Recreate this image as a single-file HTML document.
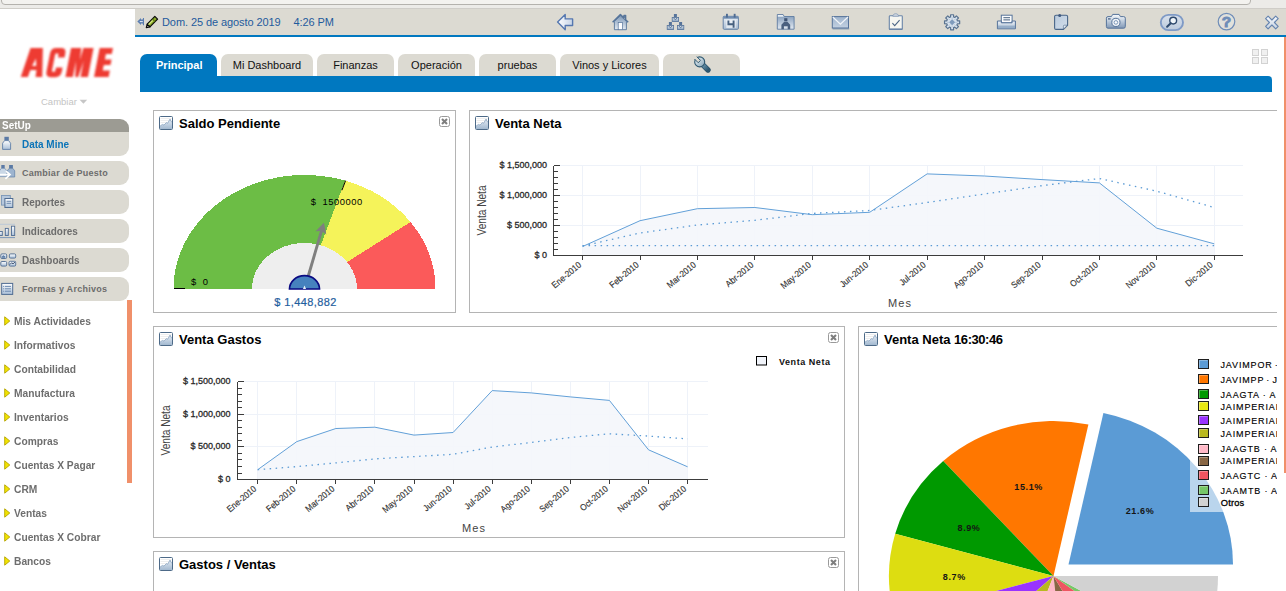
<!DOCTYPE html>
<html>
<head>
<meta charset="utf-8">
<title>Dashboard</title>
<style>
*{box-sizing:border-box;margin:0;padding:0}
html,body{width:1286px;height:591px;overflow:hidden;background:#fff;font-family:"Liberation Sans",sans-serif;}
body{position:relative}
.abs{position:absolute}
#chrome{left:0;top:0;width:1286px;height:9px;background:#ecebe8;border-bottom:1px solid #cfcdc8}
#chrome .bar{position:absolute;left:1px;top:-10px;width:1250px;height:15px;border:1px solid #b4b2ad;border-radius:4px;background:#f3f2ef}
#toolbar{left:135px;top:9px;width:1151px;height:26px;background:#dcdad2}
#tbline{left:135px;top:35px;width:1151px;height:2px;background:#0078c0}
#date,#date2{left:162px;top:16px;font-size:11px;color:#1f5b9d;white-space:pre;letter-spacing:-.09px}
#date2{left:293.5px}
.ico{position:absolute;top:0;height:26px}
/* sidebar */
#cambiar{left:41px;top:96px;font-size:9.5px;color:#c4c4c4}
#setup{left:0;top:119px;width:129px;height:13px;background:#9c9b93;border-top-right-radius:9px;color:#fff;font-weight:bold;font-size:11px;line-height:13px}
#setup span{position:absolute;left:2px;top:0;transform:scaleX(.905);transform-origin:0 50%}
.mi{position:absolute;left:0;width:129px;height:24px;background:#dcdad2;border-radius:0 9px 9px 0;color:#6c6c6c;font-weight:bold;font-size:11px;line-height:24px;white-space:nowrap}
.mi span{position:absolute;left:22px;top:0;display:block;transform:scaleX(.905);transform-origin:0 50%}
.mi.sm{font-size:9px}
.mi.sm span{transform:none;letter-spacing:.27px}
.mi svg{position:absolute;left:0;top:3px}
.tr{position:absolute;left:14px;color:#6e6e6e;font-weight:bold;font-size:11px;white-space:nowrap;line-height:14px;transform:scaleX(.93);transform-origin:0 50%}
.ar{position:absolute;left:4px}
#obar{left:127px;top:300px;width:5px;height:183px;background:#f0906a}
#obar2{left:1284px;top:37px;width:2px;height:436px;background:#f0906a}
/* tabs */
.tab{position:absolute;top:54px;height:22px;background:#dcdad2;border-radius:7px 7px 0 0;font-size:11px;line-height:22px;text-align:center;color:#111}
.tab.on{background:#0078c0;color:#fff;font-weight:bold;text-indent:1.5px}
#tabbar{left:140px;top:76px;width:1132px;height:16px;background:#0078c0;border-top-right-radius:4px}
/* panels */
.panel{position:absolute;border:1px solid #b4b4b4;background:#fff}
.pt{position:absolute;left:25px;top:5px;font-size:13px;font-weight:bold;color:#000;white-space:nowrap}
.pi{position:absolute;left:5px;top:5px}
.px{position:absolute;right:5px;top:5px}
#clip{left:0;top:0;width:1277px;height:591px;overflow:hidden}
svg text{font-family:"Liberation Sans",sans-serif}
</style>
</head>
<body>
<div id="chrome" class="abs"><div class="bar"></div></div>
<div id="toolbar" class="abs"><svg style="position:absolute;left:0;top:0" width="1151" height="26" viewBox="135 9 1151 26">
<defs>
<linearGradient id="ig" x1="0" y1="0" x2="0" y2="1"><stop offset="0" stop-color="#eef3f8"/><stop offset="1" stop-color="#7f9bbb"/></linearGradient>
<linearGradient id="ig2" x1="0" y1="0" x2="0" y2="1"><stop offset="0" stop-color="#9db3cc"/><stop offset="1" stop-color="#5f7fa6"/></linearGradient>
<linearGradient id="ig0" x1="0" y1="0" x2="1" y2="0"><stop offset="0" stop-color="#ffffff"/><stop offset="1" stop-color="#c6d3e6"/></linearGradient>
<linearGradient id="ig3" x1="0" y1="0" x2="0" y2="1"><stop offset="0" stop-color="#7f99b8"/><stop offset="1" stop-color="#e3eaf2"/></linearGradient>
<linearGradient id="ig4" x1="0" y1="0" x2="0" y2="1"><stop offset="0" stop-color="#eef2f7"/><stop offset="1" stop-color="#a9bdd3"/></linearGradient>
<linearGradient id="ig5" x1="0" y1="0" x2="0" y2="1"><stop offset="0" stop-color="#9fb4cd"/><stop offset="1" stop-color="#c3d1e1"/></linearGradient>
<linearGradient id="ig6" x1="0" y1="0" x2="1" y2="1"><stop offset="0" stop-color="#b9cadd"/><stop offset="1" stop-color="#d3deea"/></linearGradient>
<linearGradient id="ig7" x1="0" y1="0" x2="0" y2="1"><stop offset="0" stop-color="#fbfcfd"/><stop offset=".45" stop-color="#c3d0df"/><stop offset="1" stop-color="#7f97b5"/></linearGradient>
<linearGradient id="ig8" x1="0" y1="0" x2="0" y2="1"><stop offset="0" stop-color="#d9e1ec"/><stop offset="1" stop-color="#bccadc"/></linearGradient>
<linearGradient id="ig9" x1="0" y1="0" x2="0" y2="1"><stop offset="0" stop-color="#fbfcfe"/><stop offset="1" stop-color="#c3d0e0"/></linearGradient>
</defs>
<!-- pin -->
<path d="M137.300 21.600l3.700-3.500v1.500h1.700l.4-1.600h.9v7.200h-.9l-.4-1.600H141v1.500z" fill="#5b7db0"/>
<path d="M139.800 21.600h3" stroke="#e8eef6" stroke-width="1"/>
<!-- pencil -->
<path d="M147.18 24.06L154.82 16.42L157.58 19.18L149.94 26.82z" fill="#8aab28" stroke="#0a0a0a" stroke-width="1.200" stroke-linejoin="round"/>
<path d="M146.30 27.70L147.18 24.06L149.94 26.82z" fill="#f4f1dc" stroke="#0a0a0a" stroke-width="1.200" stroke-linejoin="round"/>
<path d="M148.56 24.59L152.66 20.49" stroke="#d9ea86" stroke-width="1.200"/>
<path d="M151.99 19.25L152.77 18.47L155.53 21.23L154.75 22.01z" fill="#5e7a14"/>
<!-- back -->
<path d="M557.6 22l7.6-7.4v4.3h7.4v6.6h-7.4v4.3z" fill="url(#ig0)" stroke="#5577b0" stroke-width="1.400" stroke-linejoin="round"/>
<!-- home -->
<path d="M612.6 22.2l7.8-7.6 3.6 3.5v-2.6h1.6v4.2l2.6 2.5" fill="none" stroke="#56749a" stroke-width="1.5" stroke-linejoin="round"/>
<path d="M614.4 21.4l6-5.7 6 5.7v8.300h-12z" fill="url(#ig3)" stroke="#56749a" stroke-width=".9"/>
<rect x="618.2" y="22.6" width="4.400" height="7.100" fill="#fbfcfe" stroke="#56749a" stroke-width=".7"/>
<!-- org -->
<g stroke="#56739a" stroke-width=".8" fill="url(#ig)"><rect x="672.2" y="17.400" width="6.400" height="4.200"/><rect x="667.2" y="25.400" width="6.400" height="4.200"/><rect x="677.400" y="25.400" width="6.400" height="4.200"/></g>
<g fill="#56739a"><rect x="673.900" y="14" width="3" height="3.400"/><rect x="668.900" y="22" width="3" height="3.400"/><rect x="679.100" y="22" width="3" height="3.400"/></g>
<path d="M673.400 18l2 1.500 2-1.500M668.400 26l2 1.500 2-1.500M678.600 26l2 1.500 2-1.500" fill="none" stroke="#3f5a80" stroke-width=".8"/>
<!-- calendar -->
<rect x="723.2" y="16.300" width="15.200" height="13" rx="1" fill="url(#ig4)" stroke="#6582a6" stroke-width="1"/>
<rect x="723.2" y="16.300" width="15.200" height="2.400" fill="#6f8cb0"/>
<rect x="726" y="13.800" width="1.900" height="3.800" fill="#4f6c92"/><rect x="733.700" y="13.800" width="1.900" height="3.800" fill="#4f6c92"/>
<rect x="726.300" y="20" width="9.400" height="8" fill="#f4f7fa" opacity=".7"/>
<path d="M728.400 20.400v3.800h5.200v-3.800v7.400" fill="none" stroke="#46607f" stroke-width="1.900"/>
<!-- folder person -->
<path d="M777.300 29.200V14.600h5.800l1.200 1.900h9.800V29.200z" fill="url(#ig3)" stroke="#5f7ca2" stroke-width=".9" stroke-linejoin="round"/>
<path d="M777.800 15.100h5l1 1.600h-6z" fill="#e9eff5"/>
<rect x="784.200" y="18.200" width="3.200" height="3.200" fill="#3f5474"/>
<path d="M781.400 29.200v-4.400l2.600-2.800h3.600l2.600 2.800v4.400h-2.500v-3h-3.800v3z" fill="#4a607f"/>
<!-- mail -->
<rect x="832.300" y="16.600" width="16.200" height="11.400" fill="url(#ig5)" stroke="#56739a" stroke-width="1"/>
<path d="M832.800 17l7.600 7.200 7.600-7.200" fill="none" stroke="#f2f5f9" stroke-width="1.200"/>
<rect x="832.600" y="28.200" width="16.600" height="1.200" fill="#6583a8" opacity=".8"/>
<!-- clipboard -->
<rect x="889.300" y="15.700" width="13" height="13.800" rx=".8" fill="#f6f6f1" stroke="#6a85a8" stroke-width="1.100"/>
<path d="M889.300 28.400h13v1.300h-13z" fill="#6a85a8"/>
<path d="M892.800 16.200c0-3.200 5.800-3.200 5.800 0z" fill="#d9dee4" stroke="#7a93b2" stroke-width=".8"/>
<path d="M892.400 23.200l2.300 2.500 4.900-5.600" fill="none" stroke="#4a6484" stroke-width="1.050"/>
<!-- gear -->
<g transform="translate(952.1 22.300)"><path d="M5.29 -1.52 L7.56 -1.47 L7.56 1.47 L5.29 1.52 L4.81 2.67 L6.38 4.31 L4.31 6.38 L2.67 4.81 L1.52 5.29 L1.47 7.56 L-1.47 7.56 L-1.52 5.29 L-2.67 4.81 L-4.31 6.38 L-6.38 4.31 L-4.81 2.67 L-5.29 1.52 L-7.56 1.47 L-7.56 -1.47 L-5.29 -1.52 L-4.81 -2.67 L-6.38 -4.31 L-4.31 -6.38 L-2.67 -4.81 L-1.52 -5.29 L-1.47 -7.56 L1.47 -7.56 L1.52 -5.29 L2.67 -4.81 L4.31 -6.38 L6.38 -4.31 L4.81 -2.67Z" fill="#d9e3ed" stroke="#5a7391" stroke-width="1.200" stroke-linejoin="round"/>
<path d="M0-3L3 0 0 3-3 0z" fill="#7f9bbc"/><path d="M0-5.200V-3M0 3v2.200M-5.200 0H-3M3 0h2.200M-3.700-3.700l1.700 1.700M3.700-3.700l-1.700 1.700M-3.700 3.700l1.700-1.700M3.700 3.700l-1.700-1.700" stroke="#a9bdd3" stroke-width=".8"/></g>
<!-- printer -->
<rect x="1001.300" y="15.200" width="10.800" height="7.600" fill="#fbfcfd" stroke="#56739a" stroke-width="1"/>
<path d="M1003.400 17.700h6.600M1003.400 19.900h6.600" stroke="#46607f" stroke-width="1"/>
<path d="M997.400 21h3.900v1.800h10.800V21h3.300v7.800h-18z" fill="url(#ig4)" stroke="#56739a" stroke-width="1" stroke-linejoin="round"/>
<rect x="997.900" y="25.600" width="17" height="2.800" fill="#8aa4c2" opacity=".75"/>
<!-- note -->
<path d="M1054.600 16.600q0-1.400 1.400-1.400h10.200q1.400 0 1.400 1.400v8.600l-4.200 4.200h-7.400q-1.400 0-1.400-1.400z" fill="url(#ig6)" stroke="#4a6688" stroke-width="1.100"/>
<path d="M1067.400 25.200h-3q-1 0-1 1v3z" fill="#e4ebf3" stroke="#4a6688" stroke-width=".6"/>
<circle cx="1059.700" cy="15.400" r="1.500" fill="#3f5a80"/>
<!-- camera -->
<path d="M1106.400 18.200q0-1.600 1.600-1.600h3.400l1.300-2.200h6.400l1.300 2.200h3.300q1.600 0 1.600 1.600v8.400q0 1.600-1.600 1.600h-15.700q-1.600 0-1.600-1.600z" fill="url(#ig7)" stroke="#56739a" stroke-width="1"/>
<circle cx="1115.900" cy="22.400" r="4.100" fill="#eef2f7" stroke="#56739a" stroke-width="1"/><circle cx="1115.900" cy="22.400" r="1.800" fill="#fbfcfe" stroke="#6f8cb0" stroke-width=".9"/>
<rect x="1108" y="18.300" width="2.600" height="1.200" fill="#3f5a80"/>
<!-- search -->
<rect x="1160.800" y="14.900" width="22.200" height="15.200" rx="7.600" fill="url(#ig8)" stroke="#7f9ac6" stroke-width="1.900"/>
<circle cx="1173.200" cy="20.600" r="3.400" fill="#f0f5f9" stroke="#2f4a6e" stroke-width="1.400"/>
<path d="M1170.700 23.300l-3.600 3.400" stroke="#2f4a6e" stroke-width="2" stroke-linecap="round"/>
<!-- help -->
<circle cx="1226.500" cy="21.600" r="8.300" fill="#e1e1dc" stroke="#6f8db8" stroke-width="1.200"/>
<text x="1226.600" y="27.300" font-size="15.500" style="font-weight:700" fill="#6f8db8" stroke="#6f8db8" stroke-width=".9" text-anchor="middle">?</text>
<!-- close X -->
<path d="M1265.6 18.7 L1268.1 16.2 L1271.9 20.0 L1275.7 16.2 L1278.2 18.7 L1274.4 22.5 L1278.2 26.3 L1275.7 28.8 L1271.9 25.0 L1268.1 28.8 L1265.6 26.3 L1269.4 22.5Z" fill="url(#ig9)" stroke="#6483ae" stroke-width="1.100" stroke-linejoin="round"/>
</svg>
</div>
<div id="tbline" class="abs"></div>
<div id="date" class="abs">Dom. 25 de agosto 2019</div><div id="date2" class="abs">4:26 PM</div>

<!-- SIDEBAR -->
<svg class="abs" style="left:10px;top:40px" width="114" height="46" viewBox="10 40 114 46">
<defs><filter id="lb" x="-5%" y="-10%" width="110%" height="120%"><feGaussianBlur stdDeviation="0.8"/></filter></defs>
<g fill="#ee3a32" fill-rule="evenodd" style="filter:url(#lb)"><g transform="skewX(-11) translate(14.500 0)">
<path d="M21.2 77L25.4 48H37.700L42.700 77H36L35.600 70H29.500L28.300 77zM30.400 65.900H34.500L32.900 58.600z"/>
<path d="M45.9 53.4q0-5.4 5.4-5.4H55.8q5.4 0 5.4 5.4v4h-6.600v-3q0-1-1-1h-1.400q-1 0-1 1v16.400q0 1 1 1h1.400q1 0 1-1v-3.400h6.600v4.400q0 5.4-5.4 5.4H51.3q-5.4 0-5.4-5.4z"/>
<path d="M65.9 77V48h10.2l1.0 12L78.2 48H88.4v29h-7.4V61L78.7 77h-3L73.3 61V77z"/>
<path d="M94.5 77V48h13.3v6.100h-5.9v5.300h6.7v5.600h-6.7v5.600h7.2V77z"/>
</g></g>
</svg>
<div id="cambiar" class="abs">Cambiar</div><svg class="abs" style="left:79px;top:99px" width="9" height="6" viewBox="0 0 9 6"><path d="M.6.8h7.600L4.400 4.800z" fill="#c6c6c6"/></svg>
<div id="setup" class="abs"><span>SetUp</span></div>
<div class="mi" style="top:132px;border-top-right-radius:0;color:#0b74b8"><svg style="position:absolute;left:0;top:0" width="22" height="24" viewBox="0 0 22 24"><defs><linearGradient id="sg" x1="0" y1="0" x2="0" y2="1"><stop offset="0" stop-color="#ffffff"/><stop offset="1" stop-color="#a9bfd8"/></linearGradient></defs><rect x="4.4" y="4.8" width="4.4" height="4" fill="#5b7aa5"/><path d="M2.6 11.200l2-2.600h4l2 2.600v6.200h-8z" fill="url(#sg)" stroke="#5f7fa8" stroke-width=".9" stroke-linejoin="round"/></svg><span>Data Mine</span></div>
<div class="mi sm" style="top:161px"><svg style="position:absolute;left:0;top:0" width="22" height="24" viewBox="0 0 22 24"><rect x="1.300" y="4" width="3.400" height="3.400" fill="#5b7aa5"/><rect x="9.100" y="4" width="3.800" height="3.400" fill="#5b7aa5"/><path d="M-.5 9.800l1.800-2.400h3.600l1.800 2.400v5.800h-7.200z" fill="#c9d7e6" stroke="#6f8db3" stroke-width=".7"/><path d="M7.300 9.800l1.800-2.400h3.800l1.800 2.400v6.200h-7.400z" fill="#9db4cf" stroke="#5f7fa8" stroke-width=".7"/><path d="M0 13.600h9.500M6 10.200l4 3.400-4.600 4.200" fill="none" stroke="#fff" stroke-width="1.700" stroke-linejoin="miter"/></svg><span>Cambiar de Puesto</span></div>
<div class="mi" style="top:190px"><svg style="position:absolute;left:0;top:0" width="22" height="24" viewBox="0 0 22 24"><defs><linearGradient id="sg3" x1="0" y1="0" x2="0" y2="1"><stop offset="0" stop-color="#ffffff"/><stop offset="1" stop-color="#a9bfd8"/></linearGradient></defs><rect x="1.500" y="5.500" width="8.800" height="9.600" fill="#b7c8dc" stroke="#7b97b8" stroke-width=".9"/><rect x="4.900" y="8.500" width="7.900" height="9" fill="url(#sg3)" stroke="#4f6c92" stroke-width="1"/><path d="M6.600 11.300h4.600M6.600 13.300h4.600" stroke="#5f7fa8" stroke-width=".9"/></svg><span>Reportes</span></div>
<div class="mi" style="top:219px"><svg style="position:absolute;left:0;top:0" width="22" height="24" viewBox="0 0 22 24"><defs><linearGradient id="sg4" x1="0" y1="0" x2="0" y2="1"><stop offset="0" stop-color="#ffffff"/><stop offset="1" stop-color="#a9bfd8"/></linearGradient></defs><path d="M0 5.300h15" stroke="#b4c4d8" stroke-width=".8"/><path d="M0 18.600h15" stroke="#7b97b8" stroke-width="1"/><g fill="url(#sg4)" stroke="#4f6c92" stroke-width=".9"><rect x="-.5" y="12.500" width="2.800" height="4"/><rect x="5.300" y="9.400" width="3" height="7.100"/><rect x="11.500" y="7.200" width="3.200" height="9.300"/></g></svg><span>Indicadores</span></div>
<div class="mi" style="top:248px"><svg style="position:absolute;left:0;top:0" width="22" height="24" viewBox="0 0 22 24"><defs><linearGradient id="sg5" x1="0" y1="0" x2="0" y2="1"><stop offset="0" stop-color="#ffffff"/><stop offset="1" stop-color="#a9bfd8"/></linearGradient></defs><g fill="url(#sg5)" stroke="#4f6c92" stroke-width=".9"><rect x=".8" y="5.900" width="5.900" height="4.600" rx="1.200"/><rect x="9.400" y="5.900" width="6.300" height="4.200" rx="1.200"/><rect x=".8" y="13.500" width="5.900" height="4.600" rx="1.200"/><rect x="9" y="13.300" width="6.700" height="4.800" rx="1.200"/></g><path d="M2 9.800v-1.400l1.300-1.400 1 1.200.8-.6v2.200z" fill="#5f7fa8"/><path d="M9.800 16.600l1.800-1.800 1.400 1 2.200-1.800" fill="none" stroke="#2f4566" stroke-width=".9"/></svg><span>Dashboards</span></div>
<div class="mi sm" style="top:277px"><svg style="position:absolute;left:0;top:0" width="22" height="24" viewBox="0 0 22 24"><defs><linearGradient id="sg6" x1="0" y1="0" x2="0" y2="1"><stop offset="0" stop-color="#ffffff"/><stop offset="1" stop-color="#a9bfd8"/></linearGradient></defs><rect x="1.700" y="6.400" width="11" height="11" fill="url(#sg6)" stroke="#4f6c92" stroke-width="1"/><path d="M4.800 9.400h6.200M4.800 11.800h6.200M4.800 14.200h6.200" stroke="#5f7fa8" stroke-width=".9"/><path d="M3 9.400h.9M3 11.800h.9M3 14.200h.9" stroke="#5f7fa8" stroke-width=".9"/></svg><span>Formas y Archivos</span></div>
<div id="obar" class="abs"></div>
<svg class="ar" style="top:316px" width="7" height="10" viewBox="0 0 7 10"><path d="M.7.8L5.8 5 .7 9.2z" fill="#f2e300" stroke="#b4a400" stroke-width=".9" stroke-linejoin="round"/></svg><div class="tr" style="top:314px">Mis Actividades</div>
<svg class="ar" style="top:340px" width="7" height="10" viewBox="0 0 7 10"><path d="M.7.8L5.8 5 .7 9.2z" fill="#f2e300" stroke="#b4a400" stroke-width=".9" stroke-linejoin="round"/></svg><div class="tr" style="top:338px">Informativos</div>
<svg class="ar" style="top:364px" width="7" height="10" viewBox="0 0 7 10"><path d="M.7.8L5.8 5 .7 9.2z" fill="#f2e300" stroke="#b4a400" stroke-width=".9" stroke-linejoin="round"/></svg><div class="tr" style="top:362px">Contabilidad</div>
<svg class="ar" style="top:388px" width="7" height="10" viewBox="0 0 7 10"><path d="M.7.8L5.8 5 .7 9.2z" fill="#f2e300" stroke="#b4a400" stroke-width=".9" stroke-linejoin="round"/></svg><div class="tr" style="top:386px">Manufactura</div>
<svg class="ar" style="top:412px" width="7" height="10" viewBox="0 0 7 10"><path d="M.7.8L5.8 5 .7 9.2z" fill="#f2e300" stroke="#b4a400" stroke-width=".9" stroke-linejoin="round"/></svg><div class="tr" style="top:410px">Inventarios</div>
<svg class="ar" style="top:436px" width="7" height="10" viewBox="0 0 7 10"><path d="M.7.8L5.8 5 .7 9.2z" fill="#f2e300" stroke="#b4a400" stroke-width=".9" stroke-linejoin="round"/></svg><div class="tr" style="top:434px">Compras</div>
<svg class="ar" style="top:460px" width="7" height="10" viewBox="0 0 7 10"><path d="M.7.8L5.8 5 .7 9.2z" fill="#f2e300" stroke="#b4a400" stroke-width=".9" stroke-linejoin="round"/></svg><div class="tr" style="top:458px">Cuentas X Pagar</div>
<svg class="ar" style="top:484px" width="7" height="10" viewBox="0 0 7 10"><path d="M.7.8L5.8 5 .7 9.2z" fill="#f2e300" stroke="#b4a400" stroke-width=".9" stroke-linejoin="round"/></svg><div class="tr" style="top:482px">CRM</div>
<svg class="ar" style="top:508px" width="7" height="10" viewBox="0 0 7 10"><path d="M.7.8L5.8 5 .7 9.2z" fill="#f2e300" stroke="#b4a400" stroke-width=".9" stroke-linejoin="round"/></svg><div class="tr" style="top:506px">Ventas</div>
<svg class="ar" style="top:532px" width="7" height="10" viewBox="0 0 7 10"><path d="M.7.8L5.8 5 .7 9.2z" fill="#f2e300" stroke="#b4a400" stroke-width=".9" stroke-linejoin="round"/></svg><div class="tr" style="top:530px">Cuentas X Cobrar</div>
<svg class="ar" style="top:556px" width="7" height="10" viewBox="0 0 7 10"><path d="M.7.8L5.8 5 .7 9.2z" fill="#f2e300" stroke="#b4a400" stroke-width=".9" stroke-linejoin="round"/></svg><div class="tr" style="top:554px">Bancos</div>

<!-- TABS -->
<div class="tab on" style="left:140px;width:77px">Principal</div>
<div class="tab" style="left:221px;width:92px">Mi Dashboard</div>
<div class="tab" style="left:317px;width:77px">Finanzas</div>
<div class="tab" style="left:398px;width:77px">Operación</div>
<div class="tab" style="left:479px;width:77px">pruebas</div>
<div class="tab" style="left:560px;width:99px">Vinos y Licores</div>
<div class="tab" style="left:663px;width:77px" id="wtab"><svg style="position:absolute;left:0;top:0" width="77" height="22" viewBox="663 54 77 22"><defs><linearGradient id="wg" x1="0" y1="0" x2="1" y2="1"><stop offset="0" stop-color="#f4f8fa"/><stop offset="1" stop-color="#7fa0b4"/></linearGradient><linearGradient id="wh" x1="0" y1="0" x2="1" y2="1"><stop offset="0" stop-color="#6f9ab2"/><stop offset="1" stop-color="#2b566f"/></linearGradient></defs>
<path d="M702.4 64.4l5.600 5.600" stroke="#2a5068" stroke-width="5.400" stroke-linecap="round"/>
<path d="M702.4 64.4l5.600 5.600" stroke="url(#wh)" stroke-width="4" stroke-linecap="round"/>
<circle cx="699.700" cy="61.900" r="5" fill="url(#wg)" stroke="#2f5870" stroke-width="1.100"/>
<path d="M700.500 60.400L695.400 55.300 693.100 57.600 698.200 62.700z" fill="#dcdad2"/>
<path d="M696.800 56.700L700.500 60.400 698.200 62.700 694.500 59" fill="none" stroke="#2f5870" stroke-width="1"/>
</svg></div>
<div id="tabbar" class="abs"></div>
<svg class="abs" style="left:1252px;top:49px" width="16" height="15" viewBox="0 0 16 15"><g fill="#f0f0f0" stroke="#d2d2d2" stroke-width="1"><rect x=".5" y=".5" width="6" height="6"/><rect x="9.500" y=".5" width="6" height="6"/><rect x=".5" y="8.500" width="6" height="6"/><rect x="9.500" y="8.500" width="6" height="6"/></g></svg>

<div id="clip" class="abs">
<div class="panel" id="p1" style="left:153px;top:110px;width:303px;height:203px"><div class="pt">Saldo Pendiente</div><svg class="pi" width="14" height="14" viewBox="0 0 14 14"><defs><linearGradient id="pg" x1="0" y1="0" x2="0" y2="1"><stop offset="0" stop-color="#e6edf5"/><stop offset="1" stop-color="#a3b9d0"/></linearGradient></defs><rect x=".5" y=".5" width="13" height="13" rx="1" fill="#fff" stroke="#4d6a88"/><path d="M1.500 2.500h11M1.500 4.500h11M1.500 6.500h11" stroke="#e2e2e2" stroke-width=".6"/><path d="M1 10.200L3.400 8.400l1.600.7 2.400-2.500 1.200.7 2.500-4.300.8 2.300 1.100.8V13H1z" fill="url(#pg)"/><path d="M1 10.200L3.400 8.400l1.600.7 2.400-2.500 1.200.7 2.500-4.300.8 2.300 1.100.8" fill="none" stroke="#8aa5c2" stroke-width=".8"/></svg><svg class="px" width="11" height="11" viewBox="0 0 11 11"><rect x=".5" y=".5" width="10" height="10" rx="2" fill="#fff" stroke="#9a9a9a"/><path d="M3 3l5 5M8 3l-5 5" stroke="#7e7e7e" stroke-width="2.1"/></svg></div>
<div class="panel" id="p2" style="left:469px;top:110px;width:830px;height:203px"><div class="pt">Venta Neta</div><svg class="pi" width="14" height="14" viewBox="0 0 14 14"><defs><linearGradient id="pg" x1="0" y1="0" x2="0" y2="1"><stop offset="0" stop-color="#e6edf5"/><stop offset="1" stop-color="#a3b9d0"/></linearGradient></defs><rect x=".5" y=".5" width="13" height="13" rx="1" fill="#fff" stroke="#4d6a88"/><path d="M1.500 2.500h11M1.500 4.500h11M1.500 6.500h11" stroke="#e2e2e2" stroke-width=".6"/><path d="M1 10.200L3.400 8.400l1.600.7 2.400-2.500 1.200.7 2.500-4.300.8 2.300 1.100.8V13H1z" fill="url(#pg)"/><path d="M1 10.200L3.400 8.400l1.600.7 2.400-2.500 1.200.7 2.500-4.300.8 2.300 1.100.8" fill="none" stroke="#8aa5c2" stroke-width=".8"/></svg></div>
<div class="panel" id="p3" style="left:153px;top:326px;width:692px;height:212px"><div class="pt">Venta Gastos</div><svg class="pi" width="14" height="14" viewBox="0 0 14 14"><defs><linearGradient id="pg" x1="0" y1="0" x2="0" y2="1"><stop offset="0" stop-color="#e6edf5"/><stop offset="1" stop-color="#a3b9d0"/></linearGradient></defs><rect x=".5" y=".5" width="13" height="13" rx="1" fill="#fff" stroke="#4d6a88"/><path d="M1.500 2.500h11M1.500 4.500h11M1.500 6.500h11" stroke="#e2e2e2" stroke-width=".6"/><path d="M1 10.200L3.400 8.400l1.600.7 2.400-2.500 1.200.7 2.500-4.300.8 2.300 1.100.8V13H1z" fill="url(#pg)"/><path d="M1 10.200L3.400 8.400l1.600.7 2.400-2.500 1.200.7 2.500-4.300.8 2.300 1.100.8" fill="none" stroke="#8aa5c2" stroke-width=".8"/></svg><svg class="px" width="11" height="11" viewBox="0 0 11 11"><rect x=".5" y=".5" width="10" height="10" rx="2" fill="#fff" stroke="#9a9a9a"/><path d="M3 3l5 5M8 3l-5 5" stroke="#7e7e7e" stroke-width="2.1"/></svg></div>
<div class="panel" id="p4" style="left:153px;top:551px;width:692px;height:100px"><div class="pt">Gastos / Ventas</div><svg class="pi" width="14" height="14" viewBox="0 0 14 14"><defs><linearGradient id="pg" x1="0" y1="0" x2="0" y2="1"><stop offset="0" stop-color="#e6edf5"/><stop offset="1" stop-color="#a3b9d0"/></linearGradient></defs><rect x=".5" y=".5" width="13" height="13" rx="1" fill="#fff" stroke="#4d6a88"/><path d="M1.500 2.500h11M1.500 4.500h11M1.500 6.500h11" stroke="#e2e2e2" stroke-width=".6"/><path d="M1 10.200L3.400 8.400l1.600.7 2.400-2.500 1.200.7 2.500-4.300.8 2.300 1.100.8V13H1z" fill="url(#pg)"/><path d="M1 10.200L3.400 8.400l1.600.7 2.400-2.500 1.200.7 2.500-4.300.8 2.300 1.100.8" fill="none" stroke="#8aa5c2" stroke-width=".8"/></svg><svg class="px" width="11" height="11" viewBox="0 0 11 11"><rect x=".5" y=".5" width="10" height="10" rx="2" fill="#fff" stroke="#9a9a9a"/><path d="M3 3l5 5M8 3l-5 5" stroke="#7e7e7e" stroke-width="2.1"/></svg></div>
<div class="panel" id="p5" style="left:858px;top:326px;width:440px;height:300px"><div class="pt">Venta Neta <span style="letter-spacing:-.45px">16:30:46</span></div><svg class="pi" width="14" height="14" viewBox="0 0 14 14"><defs><linearGradient id="pg" x1="0" y1="0" x2="0" y2="1"><stop offset="0" stop-color="#e6edf5"/><stop offset="1" stop-color="#a3b9d0"/></linearGradient></defs><rect x=".5" y=".5" width="13" height="13" rx="1" fill="#fff" stroke="#4d6a88"/><path d="M1.500 2.500h11M1.500 4.500h11M1.500 6.500h11" stroke="#e2e2e2" stroke-width=".6"/><path d="M1 10.200L3.400 8.400l1.600.7 2.400-2.500 1.200.7 2.500-4.300.8 2.300 1.100.8V13H1z" fill="url(#pg)"/><path d="M1 10.200L3.400 8.400l1.600.7 2.400-2.500 1.200.7 2.500-4.300.8 2.300 1.100.8" fill="none" stroke="#8aa5c2" stroke-width=".8"/></svg></div>
<svg class="abs" style="left:0;top:0" width="1277" height="591" viewBox="0 0 1277 591">
<g id="gauge">
<g shape-rendering="crispEdges">
<path d="M304.5,289.0 L435.5,289.0 A131.0,114.0 0 0 0 410.5,222.0 Z" fill="#fb5a5a"/>
<path d="M304.5,289.0 L410.5,222.0 A131.0,114.0 0 0 0 345.0,180.6 Z" fill="#f5f35a"/>
<path d="M304.5,289.0 L345.0,180.6 A131.0,114.0 0 0 0 173.5,289.0 Z" fill="#6cbd45"/>
<path d="M252.0,289.0 A52.5,46 0 0 1 357.0,289.0 Z" fill="#eeeeee"/>
</g>
<line x1="345.6" y1="180.6" x2="341.9" y2="190.3" stroke="#000" stroke-width="1"/>
<line x1="174" y1="288.5" x2="185" y2="288.5" stroke="#000" stroke-width="1"/>
<line x1="307.7" y1="278.0" x2="321.8" y2="229.9" stroke="#7f7f7f" stroke-width="2.9"/>
<polygon points="323.9,222.7 326.3,234.4 321.5,230.9 315.6,231.2" fill="#7f7f7f"/>
<path d="M289.5,289.0 A15,13.4 0 0 1 319.5,289.0 Z" fill="#4682be" stroke="#0a0a82" stroke-width="1.7"/>
<polygon points="304.5,285.6 302.9,289.0 306.1,289.0" fill="#e6eef7"/>
<text x="310.8" y="205.4" font-size="9.4" fill="#000">$</text><text x="322.6" y="205.4" font-size="9.4" fill="#000" textLength="39.6" lengthAdjust="spacing">1500000</text>
<text x="191" y="285.2" font-size="9.4" fill="#000">$</text><text x="202.7" y="285.2" font-size="9.4" fill="#000">0</text>
<text x="305.5" y="305.5" font-size="11" fill="#1f5e9e" stroke="#1f5e9e" stroke-width="0.2" text-anchor="middle" letter-spacing="0.4">$ 1,448,882</text>
</g>
<g id="chart1">
<g stroke="#eef2f9" stroke-width="1" shape-rendering="crispEdges">
<line x1="582.6" y1="165.5" x2="582.6" y2="255.5"/>
<line x1="640.0" y1="165.5" x2="640.0" y2="255.5"/>
<line x1="697.4" y1="165.5" x2="697.4" y2="255.5"/>
<line x1="754.9" y1="165.5" x2="754.9" y2="255.5"/>
<line x1="812.3" y1="165.5" x2="812.3" y2="255.5"/>
<line x1="869.7" y1="165.5" x2="869.7" y2="255.5"/>
<line x1="927.1" y1="165.5" x2="927.1" y2="255.5"/>
<line x1="984.5" y1="165.5" x2="984.5" y2="255.5"/>
<line x1="1042.0" y1="165.5" x2="1042.0" y2="255.5"/>
<line x1="1099.4" y1="165.5" x2="1099.4" y2="255.5"/>
<line x1="1156.8" y1="165.5" x2="1156.8" y2="255.5"/>
<line x1="1214.2" y1="165.5" x2="1214.2" y2="255.5"/>
<line x1="553.5" y1="225.5" x2="1243" y2="225.5"/>
<line x1="553.5" y1="195.5" x2="1243" y2="195.5"/>
<line x1="553.5" y1="165.5" x2="1243" y2="165.5"/>
</g>
<polygon points="582.6,255.5 582.6,246.5 640.0,220.7 697.4,208.7 754.9,207.5 812.3,214.7 869.7,212.3 927.1,173.9 984.5,176.0 1042.0,179.6 1099.4,182.9 1156.8,228.2 1214.2,243.8 1214.2,255.5" fill="#f4f6fb" fill-opacity="0.93"/>
<polyline points="582.6,246.5 640.0,220.7 697.4,208.7 754.9,207.5 812.3,214.7 869.7,212.3 927.1,173.9 984.5,176.0 1042.0,179.6 1099.4,182.9 1156.8,228.2 1214.2,243.8" fill="none" stroke="#62a0d8" stroke-width="1"/>
<polyline points="582.6,245.7 640.0,245.7 697.4,245.7 754.9,245.7 812.3,245.7 869.7,245.7 927.1,245.7 984.5,245.7 1042.0,245.7 1099.4,245.7 1156.8,245.7 1214.2,245.7" fill="none" stroke="#5b9bd5" stroke-width="1.3" stroke-dasharray="1.5 4.5"/>
<polyline points="582.6,246.0 640.0,233.0 697.4,225.0 754.9,220.3 812.3,213.4 869.7,210.5 927.1,202.5 984.5,194.0 1042.0,185.7 1099.4,178.5 1156.8,191.2 1214.2,207.5" fill="none" stroke="#5b9bd5" stroke-width="1.3" stroke-dasharray="1.5 4.5"/>
<g stroke="#3c3c3c" stroke-width="1" shape-rendering="crispEdges">
<line x1="553.5" y1="165.5" x2="553.5" y2="256.0"/>
<line x1="553.0" y1="255.5" x2="1243" y2="255.5" stroke-width="1.4"/>
<line x1="553.5" y1="255.5" x2="560.0" y2="255.5"/>
<line x1="553.5" y1="249.5" x2="557.5" y2="249.5"/>
<line x1="553.5" y1="243.5" x2="557.5" y2="243.5"/>
<line x1="553.5" y1="237.5" x2="557.5" y2="237.5"/>
<line x1="553.5" y1="231.5" x2="557.5" y2="231.5"/>
<line x1="553.5" y1="225.5" x2="560.0" y2="225.5"/>
<line x1="553.5" y1="219.5" x2="557.5" y2="219.5"/>
<line x1="553.5" y1="213.5" x2="557.5" y2="213.5"/>
<line x1="553.5" y1="207.5" x2="557.5" y2="207.5"/>
<line x1="553.5" y1="201.5" x2="557.5" y2="201.5"/>
<line x1="553.5" y1="195.5" x2="560.0" y2="195.5"/>
<line x1="553.5" y1="189.5" x2="557.5" y2="189.5"/>
<line x1="553.5" y1="183.5" x2="557.5" y2="183.5"/>
<line x1="553.5" y1="177.5" x2="557.5" y2="177.5"/>
<line x1="553.5" y1="171.5" x2="557.5" y2="171.5"/>
<line x1="553.5" y1="165.5" x2="560.0" y2="165.5"/>
<line x1="582.6" y1="255.5" x2="582.6" y2="260.0"/>
<line x1="640.0" y1="255.5" x2="640.0" y2="260.0"/>
<line x1="697.4" y1="255.5" x2="697.4" y2="260.0"/>
<line x1="754.9" y1="255.5" x2="754.9" y2="260.0"/>
<line x1="812.3" y1="255.5" x2="812.3" y2="260.0"/>
<line x1="869.7" y1="255.5" x2="869.7" y2="260.0"/>
<line x1="927.1" y1="255.5" x2="927.1" y2="260.0"/>
<line x1="984.5" y1="255.5" x2="984.5" y2="260.0"/>
<line x1="1042.0" y1="255.5" x2="1042.0" y2="260.0"/>
<line x1="1099.4" y1="255.5" x2="1099.4" y2="260.0"/>
<line x1="1156.8" y1="255.5" x2="1156.8" y2="260.0"/>
<line x1="1214.2" y1="255.5" x2="1214.2" y2="260.0"/>
</g>
<text x="547" y="167.8" font-size="9" fill="#2a2a2a" stroke="#2a2a2a" stroke-width="0.3" text-anchor="end">$ 1,500,000</text>
<text x="547" y="197.8" font-size="9" fill="#2a2a2a" stroke="#2a2a2a" stroke-width="0.3" text-anchor="end">$ 1,000,000</text>
<text x="547" y="227.8" font-size="9" fill="#2a2a2a" stroke="#2a2a2a" stroke-width="0.3" text-anchor="end">$ 500,000</text>
<text x="547" y="257.8" font-size="9" fill="#2a2a2a" stroke="#2a2a2a" stroke-width="0.3" text-anchor="end">$ 0</text>
<text transform="translate(582.0,265.9) rotate(-40) scale(0.91,1)" font-size="9" fill="#333" text-anchor="end" stroke="#333" stroke-width="0.15">Ene-2010</text>
<text transform="translate(639.4,265.9) rotate(-40) scale(0.91,1)" font-size="9" fill="#333" text-anchor="end" stroke="#333" stroke-width="0.15">Feb-2010</text>
<text transform="translate(696.8,265.9) rotate(-40) scale(0.91,1)" font-size="9" fill="#333" text-anchor="end" stroke="#333" stroke-width="0.15">Mar-2010</text>
<text transform="translate(754.3,265.9) rotate(-40) scale(0.91,1)" font-size="9" fill="#333" text-anchor="end" stroke="#333" stroke-width="0.15">Abr-2010</text>
<text transform="translate(811.7,265.9) rotate(-40) scale(0.91,1)" font-size="9" fill="#333" text-anchor="end" stroke="#333" stroke-width="0.15">May-2010</text>
<text transform="translate(869.1,265.9) rotate(-40) scale(0.91,1)" font-size="9" fill="#333" text-anchor="end" stroke="#333" stroke-width="0.15">Jun-2010</text>
<text transform="translate(926.5,265.9) rotate(-40) scale(0.91,1)" font-size="9" fill="#333" text-anchor="end" stroke="#333" stroke-width="0.15">Jul-2010</text>
<text transform="translate(983.9,265.9) rotate(-40) scale(0.91,1)" font-size="9" fill="#333" text-anchor="end" stroke="#333" stroke-width="0.15">Ago-2010</text>
<text transform="translate(1041.4,265.9) rotate(-40) scale(0.91,1)" font-size="9" fill="#333" text-anchor="end" stroke="#333" stroke-width="0.15">Sep-2010</text>
<text transform="translate(1098.8,265.9) rotate(-40) scale(0.91,1)" font-size="9" fill="#333" text-anchor="end" stroke="#333" stroke-width="0.15">Oct-2010</text>
<text transform="translate(1156.2,265.9) rotate(-40) scale(0.91,1)" font-size="9" fill="#333" text-anchor="end" stroke="#333" stroke-width="0.15">Nov-2010</text>
<text transform="translate(1213.6,265.9) rotate(-40) scale(0.91,1)" font-size="9" fill="#333" text-anchor="end" stroke="#333" stroke-width="0.15">Dic-2010</text>
<text transform="translate(486,210.5) rotate(-90) scale(0.78,1)" font-size="13" fill="#444" text-anchor="middle">Venta Neta</text>
<text x="900" y="307" font-size="11" fill="#444" text-anchor="middle" letter-spacing="1">Mes</text>
</g>
<g id="chart2">
<g stroke="#eef2f9" stroke-width="1" shape-rendering="crispEdges">
<line x1="257.7" y1="381.5" x2="257.7" y2="479.5"/>
<line x1="296.8" y1="381.5" x2="296.8" y2="479.5"/>
<line x1="335.9" y1="381.5" x2="335.9" y2="479.5"/>
<line x1="374.9" y1="381.5" x2="374.9" y2="479.5"/>
<line x1="414.0" y1="381.5" x2="414.0" y2="479.5"/>
<line x1="453.1" y1="381.5" x2="453.1" y2="479.5"/>
<line x1="492.2" y1="381.5" x2="492.2" y2="479.5"/>
<line x1="531.3" y1="381.5" x2="531.3" y2="479.5"/>
<line x1="570.3" y1="381.5" x2="570.3" y2="479.5"/>
<line x1="609.4" y1="381.5" x2="609.4" y2="479.5"/>
<line x1="648.5" y1="381.5" x2="648.5" y2="479.5"/>
<line x1="687.6" y1="381.5" x2="687.6" y2="479.5"/>
<line x1="237.5" y1="446.8" x2="707.5" y2="446.8"/>
<line x1="237.5" y1="414.2" x2="707.5" y2="414.2"/>
<line x1="237.5" y1="381.5" x2="707.5" y2="381.5"/>
</g>
<polygon points="257.7,479.5 257.7,469.7 296.8,441.6 335.9,428.5 374.9,427.2 414.0,435.1 453.1,432.5 492.2,390.6 531.3,392.9 570.3,396.9 609.4,400.4 648.5,449.8 687.6,466.8 687.6,479.5" fill="#f4f6fb" fill-opacity="0.93"/>
<polyline points="257.7,469.7 296.8,441.6 335.9,428.5 374.9,427.2 414.0,435.1 453.1,432.5 492.2,390.6 531.3,392.9 570.3,396.9 609.4,400.4 648.5,449.8 687.6,466.8" fill="none" stroke="#62a0d8" stroke-width="1"/>
<polyline points="257.7,469.7 296.8,466.6 335.9,462.9 374.9,458.9 414.0,456.6 453.1,454.3 492.2,447.0 531.3,442.5 570.3,437.5 609.4,433.8 648.5,436.1 687.6,438.9" fill="none" stroke="#5b9bd5" stroke-width="1.3" stroke-dasharray="1.5 4.5"/>
<g stroke="#3c3c3c" stroke-width="1" shape-rendering="crispEdges">
<line x1="237.5" y1="381.5" x2="237.5" y2="480.0"/>
<line x1="237.0" y1="479.5" x2="707.5" y2="479.5" stroke-width="1.4"/>
<line x1="237.5" y1="479.5" x2="244.0" y2="479.5"/>
<line x1="237.5" y1="473.0" x2="241.5" y2="473.0"/>
<line x1="237.5" y1="466.4" x2="241.5" y2="466.4"/>
<line x1="237.5" y1="459.9" x2="241.5" y2="459.9"/>
<line x1="237.5" y1="453.4" x2="241.5" y2="453.4"/>
<line x1="237.5" y1="446.8" x2="244.0" y2="446.8"/>
<line x1="237.5" y1="440.3" x2="241.5" y2="440.3"/>
<line x1="237.5" y1="433.8" x2="241.5" y2="433.8"/>
<line x1="237.5" y1="427.2" x2="241.5" y2="427.2"/>
<line x1="237.5" y1="420.7" x2="241.5" y2="420.7"/>
<line x1="237.5" y1="414.2" x2="244.0" y2="414.2"/>
<line x1="237.5" y1="407.6" x2="241.5" y2="407.6"/>
<line x1="237.5" y1="401.1" x2="241.5" y2="401.1"/>
<line x1="237.5" y1="394.6" x2="241.5" y2="394.6"/>
<line x1="237.5" y1="388.0" x2="241.5" y2="388.0"/>
<line x1="237.5" y1="381.5" x2="244.0" y2="381.5"/>
<line x1="257.7" y1="479.5" x2="257.7" y2="484.0"/>
<line x1="296.8" y1="479.5" x2="296.8" y2="484.0"/>
<line x1="335.9" y1="479.5" x2="335.9" y2="484.0"/>
<line x1="374.9" y1="479.5" x2="374.9" y2="484.0"/>
<line x1="414.0" y1="479.5" x2="414.0" y2="484.0"/>
<line x1="453.1" y1="479.5" x2="453.1" y2="484.0"/>
<line x1="492.2" y1="479.5" x2="492.2" y2="484.0"/>
<line x1="531.3" y1="479.5" x2="531.3" y2="484.0"/>
<line x1="570.3" y1="479.5" x2="570.3" y2="484.0"/>
<line x1="609.4" y1="479.5" x2="609.4" y2="484.0"/>
<line x1="648.5" y1="479.5" x2="648.5" y2="484.0"/>
<line x1="687.6" y1="479.5" x2="687.6" y2="484.0"/>
</g>
<text x="230.5" y="383.8" font-size="9" fill="#2a2a2a" stroke="#2a2a2a" stroke-width="0.3" text-anchor="end">$ 1,500,000</text>
<text x="230.5" y="416.5" font-size="9" fill="#2a2a2a" stroke="#2a2a2a" stroke-width="0.3" text-anchor="end">$ 1,000,000</text>
<text x="230.5" y="449.1" font-size="9" fill="#2a2a2a" stroke="#2a2a2a" stroke-width="0.3" text-anchor="end">$ 500,000</text>
<text x="230.5" y="481.8" font-size="9" fill="#2a2a2a" stroke="#2a2a2a" stroke-width="0.3" text-anchor="end">$ 0</text>
<text transform="translate(257.1,489.9) rotate(-40) scale(0.91,1)" font-size="9" fill="#333" text-anchor="end" stroke="#333" stroke-width="0.15">Ene-2010</text>
<text transform="translate(296.2,489.9) rotate(-40) scale(0.91,1)" font-size="9" fill="#333" text-anchor="end" stroke="#333" stroke-width="0.15">Feb-2010</text>
<text transform="translate(335.3,489.9) rotate(-40) scale(0.91,1)" font-size="9" fill="#333" text-anchor="end" stroke="#333" stroke-width="0.15">Mar-2010</text>
<text transform="translate(374.3,489.9) rotate(-40) scale(0.91,1)" font-size="9" fill="#333" text-anchor="end" stroke="#333" stroke-width="0.15">Abr-2010</text>
<text transform="translate(413.4,489.9) rotate(-40) scale(0.91,1)" font-size="9" fill="#333" text-anchor="end" stroke="#333" stroke-width="0.15">May-2010</text>
<text transform="translate(452.5,489.9) rotate(-40) scale(0.91,1)" font-size="9" fill="#333" text-anchor="end" stroke="#333" stroke-width="0.15">Jun-2010</text>
<text transform="translate(491.6,489.9) rotate(-40) scale(0.91,1)" font-size="9" fill="#333" text-anchor="end" stroke="#333" stroke-width="0.15">Jul-2010</text>
<text transform="translate(530.7,489.9) rotate(-40) scale(0.91,1)" font-size="9" fill="#333" text-anchor="end" stroke="#333" stroke-width="0.15">Ago-2010</text>
<text transform="translate(569.7,489.9) rotate(-40) scale(0.91,1)" font-size="9" fill="#333" text-anchor="end" stroke="#333" stroke-width="0.15">Sep-2010</text>
<text transform="translate(608.8,489.9) rotate(-40) scale(0.91,1)" font-size="9" fill="#333" text-anchor="end" stroke="#333" stroke-width="0.15">Oct-2010</text>
<text transform="translate(647.9,489.9) rotate(-40) scale(0.91,1)" font-size="9" fill="#333" text-anchor="end" stroke="#333" stroke-width="0.15">Nov-2010</text>
<text transform="translate(687.0,489.9) rotate(-40) scale(0.91,1)" font-size="9" fill="#333" text-anchor="end" stroke="#333" stroke-width="0.15">Dic-2010</text>
<text transform="translate(170,430.5) rotate(-90) scale(0.78,1)" font-size="13" fill="#444" text-anchor="middle">Venta Neta</text>
<text x="474" y="531.5" font-size="11" fill="#444" text-anchor="middle" letter-spacing="1">Mes</text>
<rect x="756.5" y="356.5" width="10" height="8.5" fill="#f1f4fa" stroke="#000" stroke-width="1"/>
<text x="779" y="364.5" font-size="9" font-weight="bold" fill="#111" letter-spacing="0.55">Venta Neta</text>
</g>
<g id="pie">
<path d="M1068.5,564.5 L1233.0,564.5 A164.5,155.0 0 0 0 1103.4,413.0 Z" fill="#5b9bd5"/>
<path d="M1053.5,576.0 L1088.4,424.5 A164.5,155.0 0 0 0 943.2,461.0 Z" fill="#ff7700"/>
<path d="M1053.5,576.0 L943.2,461.0 A164.5,155.0 0 0 0 895.2,533.7 Z" fill="#009900"/>
<path d="M1053.5,576.0 L895.2,533.7 A164.5,155.0 0 0 0 895.0,617.4 Z" fill="#dddd11"/>
<path d="M1053.5,576.0 L895.0,617.4 A164.5,155.0 0 0 0 932.9,681.4 Z" fill="#9933ff"/>
<path d="M1053.5,576.0 L932.9,681.4 A164.5,155.0 0 0 0 996.8,721.5 Z" fill="#b8b820"/>
<path d="M1053.5,576.0 L996.8,721.5 A164.5,155.0 0 0 0 1071.0,730.1 Z" fill="#ffb9c8"/>
<path d="M1053.5,576.0 L1071.0,730.1 A164.5,155.0 0 0 0 1134.6,710.9 Z" fill="#886644"/>
<path d="M1053.5,576.0 L1134.6,710.9 A164.5,155.0 0 0 0 1184.7,669.5 Z" fill="#ee5560"/>
<path d="M1053.5,576.0 L1184.7,669.5 A164.5,155.0 0 0 0 1196.1,653.2 Z" fill="#77c768"/>
<path d="M1053.5,576.0 L1196.1,653.2 A164.5,155.0 0 0 0 1218.0,576.0 Z" fill="#d2d2d2"/>
<text x="1140" y="513.6" font-size="9" font-weight="bold" fill="#151515" text-anchor="middle" letter-spacing="0.6">21.6%</text>
<text x="1028.6" y="489.6" font-size="9" font-weight="bold" fill="#151515" text-anchor="middle" letter-spacing="0.6">15.1%</text>
<text x="969" y="530.6" font-size="9" font-weight="bold" fill="#151515" text-anchor="middle" letter-spacing="0.6">8.9%</text>
<text x="954.3" y="579.6" font-size="9" font-weight="bold" fill="#151515" text-anchor="middle" letter-spacing="0.6">8.7%</text>
<rect x="1190" y="352" width="100" height="160" fill="#fff" fill-opacity="0.58"/>
<rect x="1198.5" y="359.5" width="10" height="9" fill="#5b9bd5" stroke="#1e1e1e" stroke-width="1"/>
<path d="M1199.5 368.0v-7.5h8" fill="none" stroke="#fff" stroke-opacity=".3" stroke-width="1"/>
<text transform="translate(1220.5,368.0) scale(0.945,1)" font-size="9.5" fill="#000" stroke="#000" stroke-width="0.15" letter-spacing="0.92" word-spacing="-1.2">JAVIMPOR · J</text>
<rect x="1198.5" y="374.5" width="10" height="9" fill="#ff7700" stroke="#1e1e1e" stroke-width="1"/>
<path d="M1199.5 383.0v-7.5h8" fill="none" stroke="#fff" stroke-opacity=".3" stroke-width="1"/>
<text transform="translate(1220.5,382.6) scale(0.945,1)" font-size="9.5" fill="#000" stroke="#000" stroke-width="0.15" letter-spacing="0.92" word-spacing="-1.2">JAVIMPP · J</text>
<rect x="1198.5" y="389.5" width="10" height="9" fill="#009900" stroke="#1e1e1e" stroke-width="1"/>
<path d="M1199.5 398.0v-7.5h8" fill="none" stroke="#fff" stroke-opacity=".3" stroke-width="1"/>
<text transform="translate(1220.5,397.5) scale(0.945,1)" font-size="9.5" fill="#000" stroke="#000" stroke-width="0.15" letter-spacing="0.92" word-spacing="-0.05">JAAGTA · A</text>
<rect x="1198.5" y="401.5" width="10" height="9" fill="#e8e811" stroke="#1e1e1e" stroke-width="1"/>
<path d="M1199.5 410.0v-7.5h8" fill="none" stroke="#fff" stroke-opacity=".3" stroke-width="1"/>
<text transform="translate(1220.5,409.6) scale(0.945,1)" font-size="9.5" fill="#000" stroke="#000" stroke-width="0.15" letter-spacing="0.92" word-spacing="-0.05">JAIMPERIAL</text>
<rect x="1198.5" y="415.5" width="10" height="9" fill="#9933ff" stroke="#1e1e1e" stroke-width="1"/>
<path d="M1199.5 424.0v-7.5h8" fill="none" stroke="#fff" stroke-opacity=".3" stroke-width="1"/>
<text transform="translate(1220.5,423.6) scale(0.945,1)" font-size="9.5" fill="#000" stroke="#000" stroke-width="0.15" letter-spacing="0.92" word-spacing="-0.05">JAIMPERIAL</text>
<rect x="1198.5" y="428.5" width="10" height="9" fill="#b8b820" stroke="#1e1e1e" stroke-width="1"/>
<path d="M1199.5 437.0v-7.5h8" fill="none" stroke="#fff" stroke-opacity=".3" stroke-width="1"/>
<text transform="translate(1220.5,437.3) scale(0.945,1)" font-size="9.5" fill="#000" stroke="#000" stroke-width="0.15" letter-spacing="0.92" word-spacing="-0.05">JAIMPERIAL</text>
<rect x="1198.5" y="444.5" width="10" height="9" fill="#ffb9c8" stroke="#1e1e1e" stroke-width="1"/>
<path d="M1199.5 453.0v-7.5h8" fill="none" stroke="#fff" stroke-opacity=".3" stroke-width="1"/>
<text transform="translate(1220.5,452.4) scale(0.945,1)" font-size="9.5" fill="#000" stroke="#000" stroke-width="0.15" letter-spacing="0.92" word-spacing="-0.05">JAAGTB · A</text>
<rect x="1198.5" y="456.5" width="10" height="9" fill="#886644" stroke="#1e1e1e" stroke-width="1"/>
<path d="M1199.5 465.0v-7.5h8" fill="none" stroke="#fff" stroke-opacity=".3" stroke-width="1"/>
<text transform="translate(1220.5,464.3) scale(0.945,1)" font-size="9.5" fill="#000" stroke="#000" stroke-width="0.15" letter-spacing="0.92" word-spacing="-0.05">JAIMPERIAL</text>
<rect x="1198.5" y="470.5" width="10" height="9" fill="#ee5560" stroke="#1e1e1e" stroke-width="1"/>
<path d="M1199.5 479.0v-7.5h8" fill="none" stroke="#fff" stroke-opacity=".3" stroke-width="1"/>
<text transform="translate(1220.5,479.2) scale(0.945,1)" font-size="9.5" fill="#000" stroke="#000" stroke-width="0.15" letter-spacing="0.92" word-spacing="-0.05">JAAGTC · A</text>
<rect x="1198.5" y="485.5" width="10" height="9" fill="#77c768" stroke="#1e1e1e" stroke-width="1"/>
<path d="M1199.5 494.0v-7.5h8" fill="none" stroke="#fff" stroke-opacity=".3" stroke-width="1"/>
<text transform="translate(1220.5,493.8) scale(0.945,1)" font-size="9.5" fill="#000" stroke="#000" stroke-width="0.15" letter-spacing="0.92" word-spacing="-0.05">JAAMTB · A</text>
<rect x="1198.5" y="497.5" width="10" height="9" fill="#d2d2d2" stroke="#1e1e1e" stroke-width="1"/>
<path d="M1199.5 506.0v-7.5h8" fill="none" stroke="#fff" stroke-opacity=".3" stroke-width="1"/>
<text x="1220.8" y="505.7" font-size="9.3" fill="#000" stroke="#000" stroke-width="0.3" letter-spacing="0.15">Otros</text>
</g>
</svg>
</div>
<div id="obar2" class="abs"></div>
</body>
</html>
